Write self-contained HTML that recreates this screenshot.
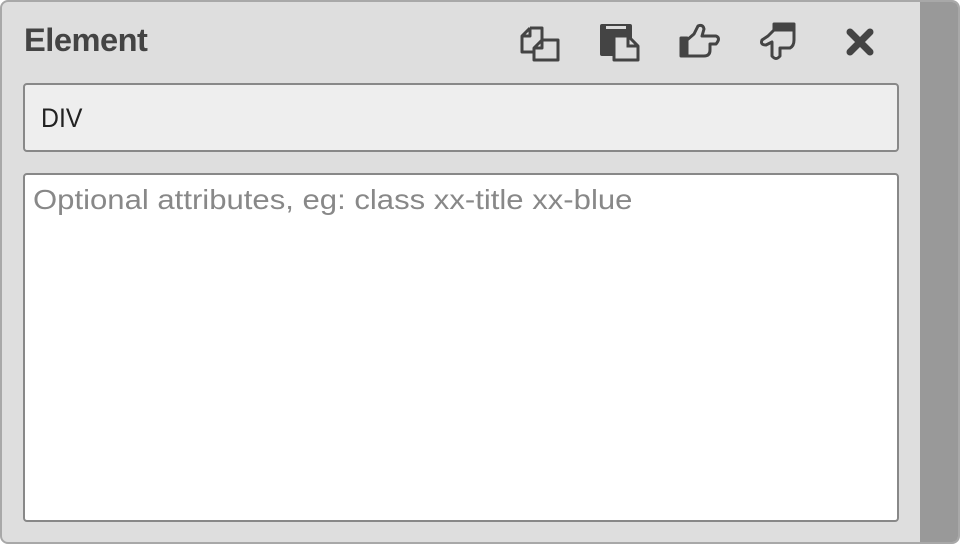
<!DOCTYPE html>
<html><head><meta charset="utf-8"><style>
html,body{margin:0;padding:0;width:960px;height:544px;overflow:hidden;background:#fff;font-family:"Liberation Sans",sans-serif}
.panel{position:absolute;left:0;top:0;width:956px;height:540px;border:2px solid #a8a8a8;border-radius:8px;background:#dedede;overflow:hidden}
.strip{position:absolute;left:918px;top:0;width:40px;height:100%;background:#999}
h1{position:absolute;left:22px;top:20px;margin:0;font-size:32px;font-weight:bold;color:#444;letter-spacing:-0.5px;transform:scaleX(1.02);transform-origin:left}
.inp{position:absolute;left:21px;top:81px;width:872px;height:65px;border:2px solid #888;border-radius:4px;background:#eee;box-sizing:content-box}
.inp span{position:absolute;left:16px;top:18px;font-size:27px;color:#222;transform:scaleX(0.92);transform-origin:left}
.ta{position:absolute;left:21px;top:171px;width:872px;height:345px;border:2px solid #888;border-radius:4px;background:#fff}
.ta span{position:absolute;left:8px;top:9px;font-size:28px;color:#888;transform:scaleX(1.11);transform-origin:left;white-space:nowrap}
svg{position:absolute;top:18px}
</style></head><body>
<div class="panel">
<div class="strip"></div>
<h1>Element</h1>
<svg style="left:514px" width="48" height="44" viewBox="0 0 48 44" fill="none" stroke="#444" stroke-width="3" stroke-linejoin="round">
<path d="M14 8 L26 8 L26 20 M14 8 L6 16 L6 32 L18 32 M14 8 L14 16 L6 16"/>
<path d="M26 20 L42 20 L42 40 L18 40 L18 28 L26 20 L26 28 L18 28"/>
</svg>
<svg style="left:594px" width="48" height="44" viewBox="0 0 48 44">
<rect x="4" y="4" width="32" height="32" rx="2" fill="#444"/>
<rect x="10" y="6" width="20" height="3" fill="#ddd"/>
<path d="M18 16 L32 16 L42 26 L42 40 L18 40 Z" fill="#dedede" stroke="#444" stroke-width="3" stroke-linejoin="round"/>
<path d="M32 16 L32 26 L42 26" fill="none" stroke="#444" stroke-width="3"/>
</svg>
<svg style="left:674px" width="48" height="44" viewBox="0 0 48 44" fill="none" stroke="#444" stroke-width="3" stroke-linejoin="round" stroke-linecap="round">
<rect x="5" y="18" width="6" height="18" fill="#444"/>
<path d="M11 20 L18 14 L22 6 Q27 4 28 9 L26 16 L40 16 Q45 18 40 24 L34 24 L34 30 Q34 36 28 36 L11 36"/>
</svg>
<svg style="left:754px" width="48" height="44" viewBox="0 0 48 44" fill="none" stroke="#444" stroke-width="3" stroke-linejoin="round" stroke-linecap="round">
<rect x="18" y="4" width="20" height="6" fill="#444"/>
<path d="M18 10 L12 16 L6 20 Q4 25 10 25 L16 22 L16 36 Q20 41 24 36 L24 28 L34 28 Q38 26 38 20 L38 10"/>
</svg>
<svg style="left:836px" width="44" height="44" viewBox="0 0 44 44" stroke="#444" stroke-width="7" stroke-linecap="round">
<path d="M12 12 L32 32 M32 12 L12 32"/>
</svg>
<div class="inp"><span>DIV</span></div>
<div class="ta"><span>Optional attributes, eg: class xx-title xx-blue</span></div>
</div>
</body></html>
